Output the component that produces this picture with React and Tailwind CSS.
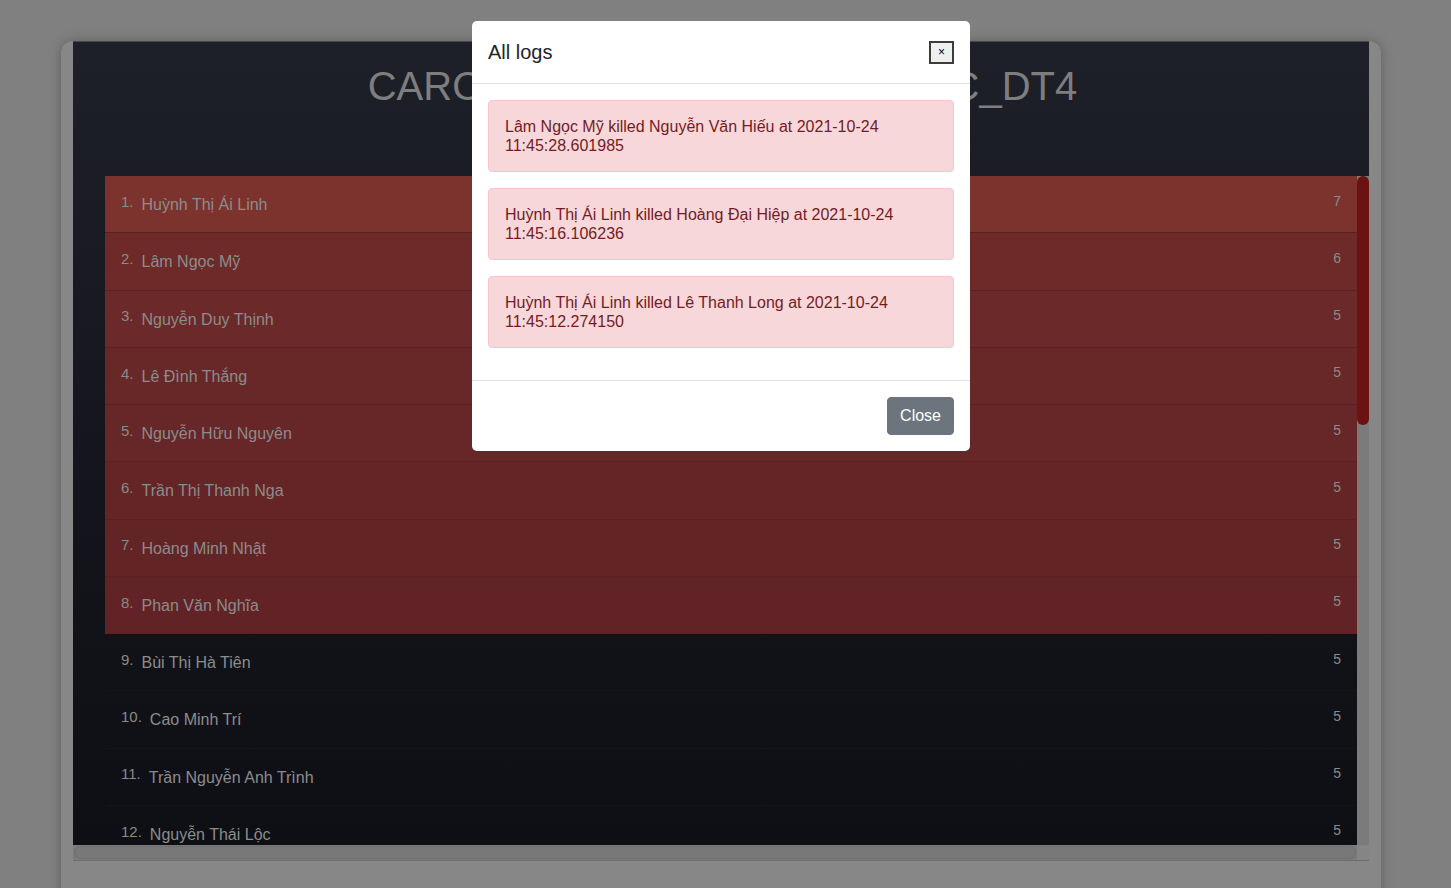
import React from "react";

const players = [
  { name: "Huỳnh Thị Ái Linh", score: 7, bg: "bg-[#7c332d]" },
  { name: "Lâm Ngọc Mỹ", score: 6, bg: "bg-[#6d2a29]" },
  { name: "Nguyễn Duy Thịnh", score: 5, bg: "bg-[#6b2929]" },
  { name: "Lê Đình Thắng", score: 5, bg: "bg-[#692828]" },
  { name: "Nguyễn Hữu Nguyên", score: 5, bg: "bg-[#672627]" },
  { name: "Trần Thị Thanh Nga", score: 5, bg: "bg-[#652526]" },
  { name: "Hoàng Minh Nhật", score: 5, bg: "bg-[#632426]" },
  { name: "Phan Văn Nghĩa", score: 5, bg: "bg-[#612326]" },
  { name: "Bùi Thị Hà Tiên", score: 5, bg: "" },
  { name: "Cao Minh Trí", score: 5, bg: "" },
  { name: "Trần Nguyễn Anh Trình", score: 5, bg: "" },
  { name: "Nguyễn Thái Lộc", score: 5, bg: "" },
];

const logs = [
  "Lâm Ngọc Mỹ killed Nguyễn Văn Hiếu at 2021-10-24 11:45:28.601985",
  "Huỳnh Thị Ái Linh killed Hoàng Đại Hiệp at 2021-10-24 11:45:16.106236",
  "Huỳnh Thị Ái Linh killed Lê Thanh Long at 2021-10-24 11:45:12.274150",
];

export default function App() {
  return (
    <div
      className="relative h-[888px] overflow-hidden bg-[#808080] pt-[41px]"
      style={{ fontFamily: '"Liberation Sans", Arial, sans-serif' }}
    >
      {/* card */}
      <div className="ml-[61px] w-[1320px] rounded-t-[12px] bg-[#878787] px-[12px] pb-[40px] shadow-[0_0_12px_rgba(0,0,0,0.25)]">
        <div className="border-t border-[#4a4a4a] bg-gradient-to-b from-[#1e2029] via-[#15161d] to-[#0e0f14]">
          <h1 className="pt-[20px] pl-[3px] text-center text-[40px] leading-[48px] font-normal text-[#7e7e7e] [word-spacing:-1px]">
            CARO TOURNAMENT 2021 - 63C_DT4
          </h1>
          <div className="mt-[66px] ml-[32px] flex h-[669px]">
            <div className="flex-1 overflow-hidden">
              {players.map((p, i) => (
                <div
                  key={i}
                  className={`flex h-[57.25px] items-center px-4 pt-[2px] ${p.bg} ${
                    p.bg ? "border-b border-[#5a2122]" : "border-b border-[#14151b]"
                  }`}
                >
                  <span className="relative -top-[3px] text-[15px] text-[#8a8a8a]">
                    {i + 1}.
                  </span>
                  <span className="ml-2 text-[16px] text-[#8c8c8c]">{p.name}</span>
                  <span className="relative -top-[4px] ml-auto text-[14px] text-[#8a8a8a]">
                    {p.score}
                  </span>
                </div>
              ))}
            </div>
            <div className="w-[12px] bg-[#7b7b7b]">
              <div className="h-[249px] w-[12px] rounded-full bg-[#6b1313]"></div>
            </div>
          </div>
        </div>
        {/* horizontal scrollbar */}
        <div className="flex h-[16px] border-b border-[#6c6c6c] bg-[#7b7b7b]">
          <div className="flex-1 px-[1px] py-[1px]">
            <div className="h-full rounded-full border border-[#6e6e6e] bg-[#787878]"></div>
          </div>
          <div className="w-[12px] bg-[#858585]"></div>
        </div>
      </div>

      {/* modal */}
      <div className="absolute left-[472px] top-[21px] w-[498px] rounded-[5px] bg-white">
        <div className="flex items-center justify-between border-b border-[#dee2e6] p-4">
          <h5 className="text-[20px] leading-[30px] text-[#212529]">All logs</h5>
          <button className="flex h-[23px] w-[25px] items-center justify-center border-2 border-[#3c3c3c] bg-[#efefef] text-[12px] leading-none text-black">
            ×
          </button>
        </div>
        <div className="flex flex-col gap-4 px-4 pt-4 pb-8">
          {logs.map((l, i) => (
            <div
              key={i}
              className="rounded-[4px] border border-[#f5c6cb] bg-[#f8d7da] p-4 text-[16px] leading-[19px] text-[#721c24]"
            >
              {l}
            </div>
          ))}
        </div>
        <div className="flex justify-end border-t border-[#dee2e6] p-4">
          <button className="rounded-[4px] border border-[#6c757d] bg-[#6c757d] px-3 py-1.5 text-[16px] leading-[24px] text-white">
            Close
          </button>
        </div>
      </div>
    </div>
  );
}
